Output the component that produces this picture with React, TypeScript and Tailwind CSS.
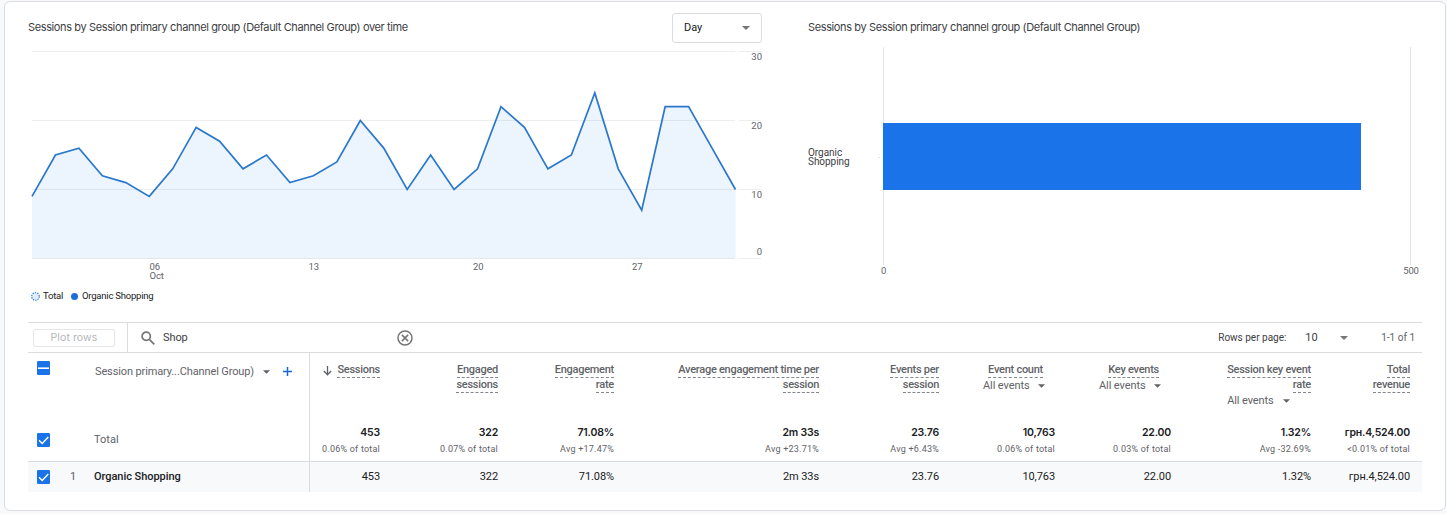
import { ReactNode } from 'react';

const dailySessions = [
  9, 15, 16, 12, 11, 9, 13, 19, 17, 13, 15, 11, 12, 14, 20, 16,
  10, 15, 10, 13, 22, 19, 13, 15, 24, 13, 7, 22, 22, 16, 10,
];

interface Column {
  lines: string[];
  filter?: boolean;
  sorted?: boolean;
  total: string;
  note: string;
  value: string;
}

const columns: Column[] = [
  { lines: ['Sessions'], sorted: true, total: '453', note: '0.06% of total', value: '453' },
  { lines: ['Engaged', 'sessions'], total: '322', note: '0.07% of total', value: '322' },
  { lines: ['Engagement', 'rate'], total: '71.08%', note: 'Avg +17.47%', value: '71.08%' },
  { lines: ['Average engagement time per', 'session'], total: '2m 33s', note: 'Avg +23.71%', value: '2m 33s' },
  { lines: ['Events per', 'session'], total: '23.76', note: 'Avg +6.43%', value: '23.76' },
  { lines: ['Event count'], filter: true, total: '10,763', note: '0.06% of total', value: '10,763' },
  { lines: ['Key events'], filter: true, total: '22.00', note: '0.03% of total', value: '22.00' },
  { lines: ['Session key event', 'rate'], filter: true, total: '1.32%', note: 'Avg -32.69%', value: '1.32%' },
  { lines: ['Total', 'revenue'], total: 'грн.4,524.00', note: '<0.01% of total', value: 'грн.4,524.00' },
];

const gridCols = 'grid grid-cols-[282px_70px_118px_116px_205px_120px_116px_116px_140px_99px]';

function Caret({ className = '' }: { className?: string }) {
  return (
    <svg width="8" height="4" viewBox="0 0 8 4" className={`shrink-0 ${className}`}>
      <path d="M0 0h8L4 4z" fill="currentColor" />
    </svg>
  );
}

function Checkbox({ partial = false }: { partial?: boolean }) {
  return (
    <svg width="13" height="14" viewBox="0 0 13 14" className="shrink-0">
      <rect width="13" height="14" rx="1.2" fill="#1a73e8" />
      {partial ? (
        <path d="M1 7.2h11" stroke="#fff" strokeWidth="1.6" />
      ) : (
        <path d="M2 7.3l3.2 3.2L11.3 4" fill="none" stroke="#fff" strokeWidth="1.4" />
      )}
    </svg>
  );
}

function ChartTitle({ children }: { children: ReactNode }) {
  return (
    <h2 className="pb-px font-['Inter',sans-serif] text-[11px] leading-none tracking-[-0.375px] text-[#3c4043] whitespace-nowrap">
      {children}
    </h2>
  );
}

function LineChart() {
  const x = (day: number) => 4 + day * 23.45;
  const y = (sessions: number) => 215.5 - sessions * 6.9;
  const points = dailySessions.map((v, i) => `${x(i)},${y(v)}`).join(' ');

  return (
    <svg width="734" height="242" viewBox="0 0 734 242" className="block text-[9.5px]">
      <polygon points={`4,215.5 ${points} 707.5,215.5`} fill="#ecf4fe" />
      {[8.5, 77.5, 146.5, 215.5].map((lineY) => (
        <path key={lineY} d={`M4 ${lineY}H707M711 ${lineY}H733`} stroke="#5f6368" strokeOpacity="0.11" />
      ))}
      <polyline points={points} fill="none" stroke="#2b78cb" strokeWidth="1.7" />
      <g fill="#5f6368" textAnchor="end">
        <text x="734" y="17">30</text>
        <text x="734" y="86">20</text>
        <text x="734" y="155">10</text>
        <text x="734" y="212">0</text>
      </g>
      <g fill="#5f6368" className="tracking-[-0.15px]">
        <text x="121.5" y="227">06</text>
        <text x="121.5" y="236">Oct</text>
        <text x="280.5" y="227">13</text>
        <text x="445" y="227">20</text>
        <text x="604" y="227">27</text>
      </g>
    </svg>
  );
}

function BarChart() {
  return (
    <svg width="614" height="242" viewBox="0 0 614 242" className="block text-[9.5px]">
      <path d="M75.5 4V222M602.5 4V222" stroke="#e3e5e8" />
      <path d="M70 114.5h2" stroke="#e3e5e8" />
      <rect x="75" y="80" width="478" height="67" fill="#1a73e8" />
      <g fill="#3c4043" className="text-[10px] tracking-[-0.05px]">
        <text x="0" y="112.5">Organic</text>
        <text x="0" y="122">Shopping</text>
      </g>
      <g fill="#5f6368" textAnchor="middle" className="tracking-[-0.2px]">
        <text x="75.5" y="231">0</text>
        <text x="603" y="231">500</text>
      </g>
    </svg>
  );
}

function Legend() {
  return (
    <div className="flex h-[22px] items-center pl-[3px] text-[9.5px] leading-none tracking-[-0.22px] text-[#202124]">
      <svg width="9" height="9" viewBox="0 0 9 9" className="mr-[3px]">
        <circle cx="4.5" cy="4.5" r="3.8" fill="#e3eefc" stroke="#1967d2" strokeWidth="1.1" strokeDasharray="1.3 1.1" />
      </svg>
      <span className="w-[28px]">Total</span>
      <span className="mr-1 size-[7px] rounded-full bg-[#1a6fdc]" />
      <span>Organic Shopping</span>
    </div>
  );
}

function Toolbar() {
  return (
    <div className="flex h-[31px] items-center border-y border-[#dadce0]">
      <div className="flex h-full w-[100px] items-center border-r border-[#dadce0] pl-[5px]">
        <button className="h-[18px] w-[82px] rounded-[2px] border border-[#e4e6e8] pt-px font-['Inter',sans-serif] text-[10.5px] leading-none tracking-[0.1px] text-[#b4b7ba]">
          Plot rows
        </button>
      </div>
      <svg width="14" height="14" viewBox="0 0 14 14" className="ml-[13px]" fill="none" stroke="#757575" strokeWidth="1.7">
        <circle cx="5.2" cy="5.2" r="4.1" />
        <path d="M8.3 8.3l5 5" />
      </svg>
      <span className="ml-2 w-[234px] pt-[2px] text-[11px] tracking-[-0.1px] text-[#3c4043]">Shop</span>
      <svg width="16" height="16" viewBox="0 0 16 16" fill="none" stroke="#757575" strokeWidth="1.5">
        <circle cx="8" cy="8" r="7" />
        <path d="M4.9 4.9l6.2 6.2M11.1 4.9l-6.2 6.2" strokeWidth="1.6" />
      </svg>
      <div className="ml-auto flex items-center pr-[7px] text-[#5f6368]">
        <span className="w-[87px] text-[10px] text-[#3c4043]">Rows per page:</span>
        <span className="w-[35px] pt-[2px] text-[11px] text-[#3c4043]">10</span>
        <Caret className="text-[#757575]" />
        <span className="ml-[33px] text-[10px]">1-1 of 1</span>
      </div>
    </div>
  );
}

function ColumnHeader({ column }: { column: Column }) {
  const wide = column.lines.length > 1;
  return (
    <div className="flex justify-end">
      <div className={column.filter && !wide ? 'w-[72px]' : ''}>
        <div className={`flex flex-col items-end ${column.filter && !wide ? 'pr-3' : ''}`}>
          {column.lines.map((line) => (
            <div key={line} className="relative flex h-[15px] items-center whitespace-nowrap font-medium tracking-[-0.26px]">
              {column.sorted && (
                <svg width="9" height="10" viewBox="0 0 9 10" className="absolute -left-[14px] top-[3px]" fill="none" stroke="#5f6368" strokeWidth="1.3">
                  <path d="M4.5 0v8.5M.8 5l3.7 3.8L8.2 5" />
                </svg>
              )}
              <span className="h-[15px] border-b border-dashed border-[#80868b] leading-[13px]">{line}</span>
            </div>
          ))}
        </div>
        {column.filter && (
          <div className="flex h-[15px] items-center pt-px text-[11px] tracking-[-0.1px]">
            All events
            <Caret className="ml-[9px] w-[7px]" />
          </div>
        )}
      </div>
    </div>
  );
}

export default function App() {
  return (
    <div className="h-[514px] bg-[#f8f9fa] pt-px pl-1 font-['Roboto',sans-serif] text-[11px] text-[#5f6368]">
      <div className="h-[510px] w-[1442px] rounded-[6px] border border-[#dadce0] bg-white px-[23px] pt-[11px]">
        <div className="flex h-[309px] gap-[46px]">
          {/* Sessions over time */}
          <section className="w-[734px]">
            <div className="flex h-[30px] items-center justify-between">
              <ChartTitle>Sessions by Session primary channel group (Default Channel Group) over time</ChartTitle>
              <button className="flex h-[30px] w-[90px] items-center justify-between rounded-[3px] border border-[#dadce0] pr-[11px] pl-[11px] text-[#202124]">
                Day
                <Caret className="text-[#757575]" />
              </button>
            </div>
            <LineChart />
            <Legend />
          </section>

          {/* Sessions by channel */}
          <section className="w-[614px]">
            <div className="flex h-[30px] items-center">
              <ChartTitle>Sessions by Session primary channel group (Default Channel Group)</ChartTitle>
            </div>
            <BarChart />
          </section>
        </div>

        <Toolbar />

        {/* Column headers */}
        <div className={`${gridCols} h-[65px]`}>
          <div className="flex items-start border-r border-[#dadce0] pt-2 pl-[9px]">
            <Checkbox partial />
            <span className="mt-[3px] ml-[45px] leading-[15px] tracking-[-0.12px] whitespace-nowrap">Session primary...Channel Group)</span>
            <Caret className="mt-[9px] ml-[9px] w-[7px]" />
            <svg width="9" height="9" viewBox="0 0 9 9" className="mt-[6px] ml-[13px]" stroke="#1967d2" strokeWidth="1.5">
              <path d="M4.5 0v9M0 4.5h9" />
            </svg>
          </div>
          {columns.map((column) => (
            <div key={column.lines.join(' ')} className="pt-[10px]">
              <ColumnHeader column={column} />
            </div>
          ))}
        </div>

        {/* Totals */}
        <div className={`${gridCols} h-[44px] border-b border-[#dadce0]`}>
          <div className="flex items-center border-r border-[#dadce0] pl-[9px]">
            <Checkbox />
            <span className="ml-[44px] pt-px">Total</span>
          </div>
          {columns.map((column) => (
            <div key={column.lines.join(' ')} className="flex flex-col items-end pt-[7px] whitespace-nowrap">
              <span className="font-['Inter',sans-serif] text-[10.5px] leading-[16px] font-semibold tracking-[-0.2px] text-[#202124]">{column.total}</span>
              <span className="pt-px text-[9px] leading-[15px] tracking-[0.22px]">{column.note}</span>
            </div>
          ))}
        </div>

        {/* Organic Shopping */}
        <div className={`${gridCols} h-[30px] bg-[#f8f9fa]`}>
          <div className="flex items-center border-r border-[#dadce0] pl-[9px]">
            <Checkbox />
            <span className="ml-5 w-6">1</span>
            <span className="font-medium tracking-[-0.05px] text-[#202124]">Organic Shopping</span>
          </div>
          {columns.map((column) => (
            <div key={column.lines.join(' ')} className="flex items-center justify-end whitespace-nowrap tracking-[-0.08px] text-[#202124]">
              {column.value}
            </div>
          ))}
        </div>
      </div>
    </div>
  );
}
